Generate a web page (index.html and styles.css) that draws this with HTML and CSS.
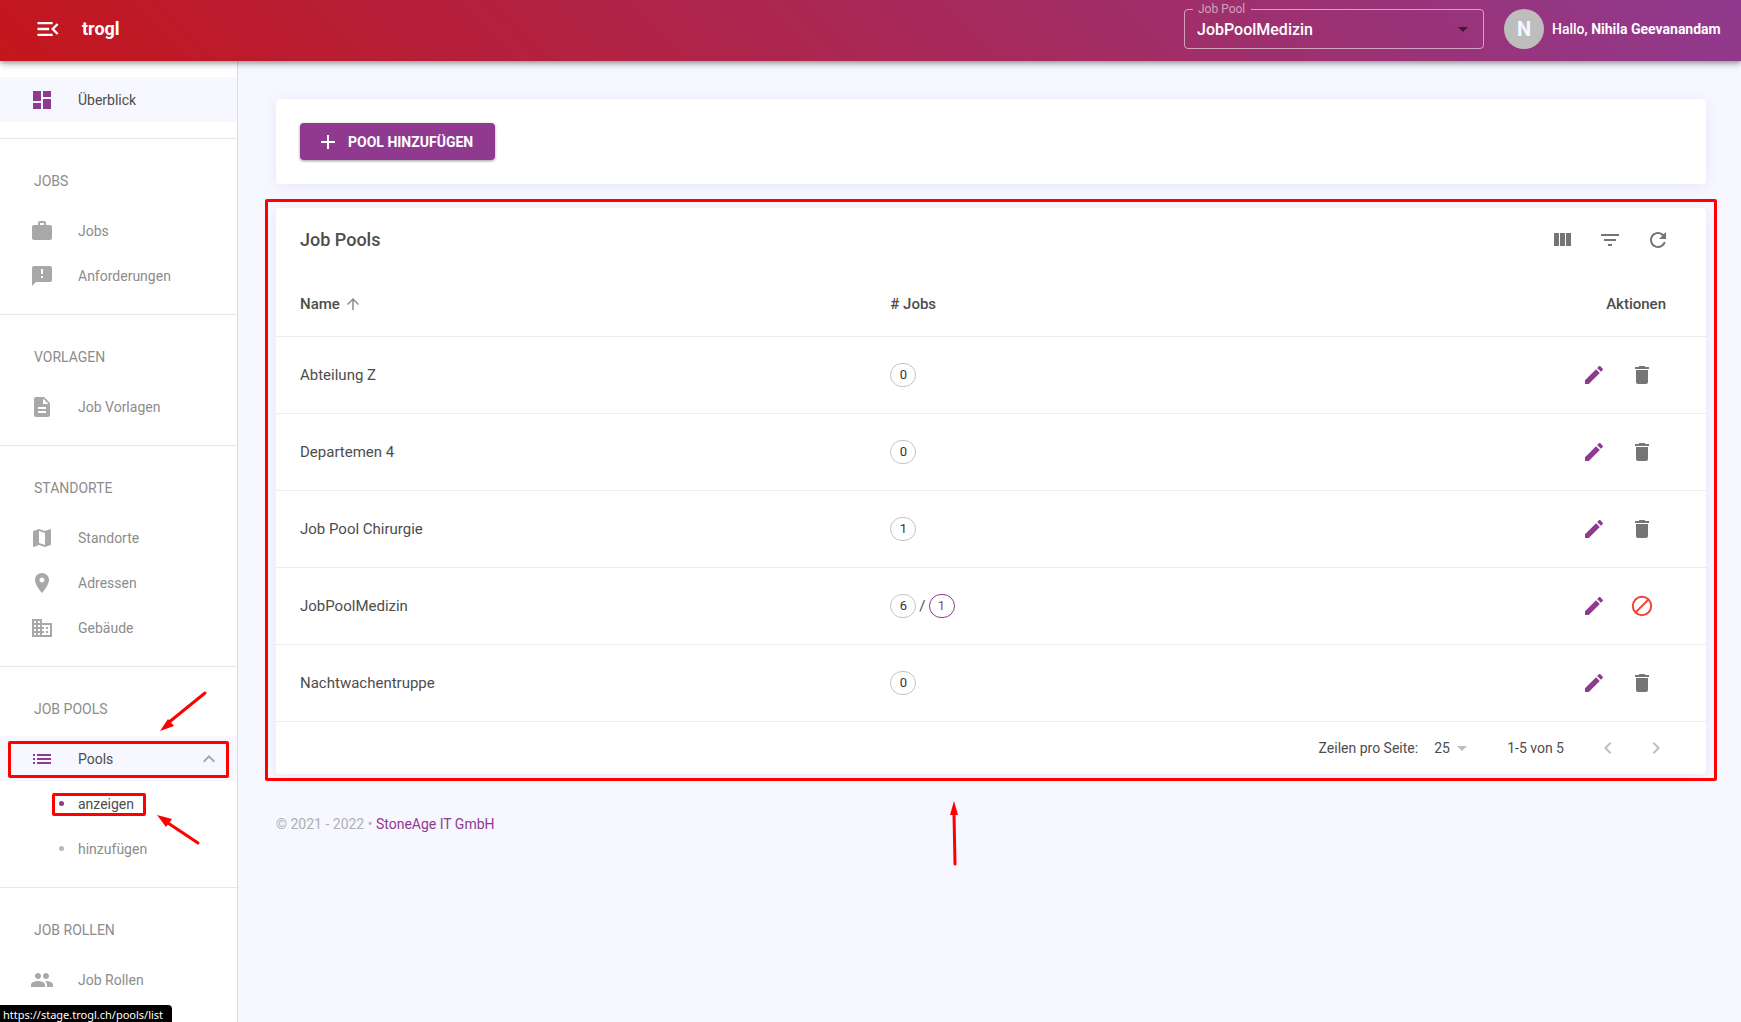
FILE: index.html
```html
<!DOCTYPE html>
<html lang="de">
<head>
<meta charset="utf-8">
<title>trogl – Job Pools</title>
<meta name="viewport" content="width=device-width, initial-scale=1">
<link rel="stylesheet" href="styles.css">
</head>
<body>
<svg class="sprite" aria-hidden="true">
  <symbol id="i-edit" viewBox="0 0 24 24"><path d="M3 17.25V21h3.75L17.81 9.94l-3.75-3.75L3 17.25zM20.71 7.04c.39-.39.39-1.02 0-1.41l-2.34-2.34c-.39-.39-1.02-.39-1.41 0l-1.83 1.83 3.75 3.75 1.83-1.83z"/></symbol>
  <symbol id="i-delete" viewBox="0 0 24 24"><path d="M6 19c0 1.1.9 2 2 2h8c1.1 0 2-.9 2-2V7H6v12zM19 4h-3.5l-1-1h-5l-1 1H5v2h14V4z"/></symbol>
  <symbol id="i-drop" viewBox="0 0 24 24"><path d="M7 10l5 5 5-5z"/></symbol>
</svg>

<header class="topbar">
  <button class="icon-btn menu-btn" aria-label="Menü einklappen"><svg class="icon icon-lg" viewBox="0 0 24 24"><path d="M3 18h13v-2H3v2zM3 13h10v-2H3v2zm0-7v2h13V6H3zm18 9.59L17.42 12 21 8.41 19.59 7l-5 5 5 5L21 15.59z"/></svg></button>
  <a class="brand" href="#">trogl</a>
  <fieldset class="pool-select">
    <legend><label for="pool">Job Pool</label></legend>
    <select id="pool"><option>JobPoolMedizin</option></select>
    <svg class="icon pool-arrow" aria-hidden="true"><use href="#i-drop"/></svg>
  </fieldset>
  <div class="user">
    <span class="avatar">N</span>
    <span>Hallo, <strong>Nihila Geevanandam</strong></span>
  </div>
</header>

<div class="layout">
  <nav class="sidebar">
    <section class="group group-first">
      <a class="nav-item active" href="#"><svg class="icon" viewBox="0 0 24 24"><path d="M3 13h8V3H3v10zm0 8h8v-6H3v6zm10 0h8V11h-8v10zm0-18v6h8V3h-8z"/></svg>Überblick</a>
    </section>
    <section class="group">
      <h2>JOBS</h2>
      <a class="nav-item" href="#"><svg class="icon" viewBox="0 0 24 24"><path d="M20 6h-4V4c0-1.110-.89-2-2-2h-4c-1.110 0-2 .89-2 2v2H4c-1.110 0-2 .89-2 2v11c0 1.110.89 2 2 2h16c1.110 0 2-.89 2-2V8c0-1.110-.89-2-2-2zm-6 0h-4V4h4v2z"/></svg>Jobs</a>
      <a class="nav-item" href="#"><svg class="icon" viewBox="0 0 24 24"><path d="M20 2H4c-1.100 0-2 .9-2 2v18l4-4h14c1.100 0 2-.9 2-2V4c0-1.100-.9-2-2-2zm-7 12h-2v-2h2v2zm0-4h-2V5h2v5z"/></svg>Anforderungen</a>
    </section>
    <section class="group">
      <h2>VORLAGEN</h2>
      <a class="nav-item" href="#"><svg class="icon" viewBox="0 0 24 24"><path d="M14 2H6c-1.100 0-2 .9-2 2v16c0 1.100.9 2 2 2h12c1.100 0 2-.9 2-2V8l-6-6zm2 16H8v-2h8v2zm0-4H8v-2h8v2zm-3-5V3.500L18.500 9H13z"/></svg>Job Vorlagen</a>
    </section>
    <section class="group">
      <h2>STANDORTE</h2>
      <a class="nav-item" href="#"><svg class="icon" viewBox="0 0 24 24"><path d="M20.500 3l-.16.03L15 5.100 9 3 3.360 4.900c-.21.07-.36.25-.36.48V20.500c0 .28.22.5.5.5l.16-.03L9 18.900l6 2.100 5.640-1.900c.21-.07.36-.25.36-.48V3.500c0-.28-.22-.5-.5-.5zM15 19l-6-2.110V5l6 2.110V19z"/></svg>Standorte</a>
      <a class="nav-item" href="#"><svg class="icon" viewBox="0 0 24 24"><path d="M12 2C8.130 2 5 5.130 5 9c0 5.250 7 13 7 13s7-7.750 7-13c0-3.870-3.130-7-7-7zm0 9.500c-1.380 0-2.500-1.120-2.500-2.500s1.120-2.500 2.500-2.500 2.500 1.120 2.500 2.500-1.120 2.500-2.500 2.500z"/></svg>Adressen</a>
      <a class="nav-item" href="#"><svg class="icon" viewBox="0 0 24 24"><path d="M12 7V3H2v18h20V7H12zM6 19H4v-2h2v2zm0-4H4v-2h2v2zm0-4H4V9h2v2zm0-4H4V5h2v2zm4 12H8v-2h2v2zm0-4H8v-2h2v2zm0-4H8V9h2v2zm0-4H8V5h2v2zm10 12h-8v-2h2v-2h-2v-2h2v-2h-2V9h8v10zm-2-8h-2v2h2v-2zm0 4h-2v2h2v-2z"/></svg>Gebäude</a>
    </section>
    <section class="group">
      <h2>JOB POOLS</h2>
      <div class="marked">
        <a class="nav-item active" href="#"><svg class="icon" viewBox="0 0 24 24"><path d="M3 13h2v-2H3v2zm0 4h2v-2H3v2zm0-8h2V7H3v2zm4 4h14v-2H7v2zm0 4h14v-2H7v2zM7 7v2h14V7H7z"/></svg>Pools<svg class="icon chevron" viewBox="0 0 24 24"><path d="M12 8l-6 6 1.410 1.410L12 10.830l4.590 4.580L18 14z"/></svg></a>
        <span class="mark mark-pools"></span>
        <svg class="arrow arrow-pools" viewBox="0 0 50 44"><path class="shaft" d="M47 3L10 33"/><path d="M2 41L10 29L16 36Z"/></svg>
      </div>
      <div class="marked">
        <a class="nav-item sub current" href="#"><i class="dot"></i>anzeigen</a>
        <span class="mark mark-show"></span>
        <svg class="arrow arrow-show" viewBox="0 0 46 34"><path class="shaft" d="M43 30L10 8"/><path d="M2 2L17 6L11 14Z"/></svg>
      </div>
      <a class="nav-item sub" href="#"><i class="dot"></i>hinzufügen</a>
    </section>
    <section class="group">
      <h2>JOB ROLLEN</h2>
      <a class="nav-item" href="#"><svg class="icon" viewBox="0 0 24 24"><path d="M16 11c1.660 0 2.990-1.340 2.990-3S17.660 5 16 5c-1.660 0-3 1.340-3 3s1.340 3 3 3zm-8 0c1.660 0 2.990-1.340 2.990-3S9.660 5 8 5C6.340 5 5 6.340 5 8s1.340 3 3 3zm0 2c-2.330 0-7 1.170-7 3.500V19h14v-2.500c0-2.330-4.670-3.500-7-3.500zm8 0c-.29 0-.62.02-.97.05 1.160.84 1.970 1.970 1.970 3.450V19h6v-2.500c0-2.330-4.670-3.500-7-3.500z"/></svg>Job Rollen</a>
    </section>
  </nav>

  <main class="content">
    <section class="card actions">
      <button class="add-btn"><svg class="icon" viewBox="0 0 24 24"><path d="M19 13h-6v6h-2v-6H5v-2h6V5h2v6h6v2z"/></svg>POOL HINZUFÜGEN</button>
    </section>

    <section class="card table-card">
      <div class="toolbar">
        <h1>Job Pools</h1>
        <button class="icon-btn" aria-label="Spalten"><svg class="icon" viewBox="0 0 24 24"><path d="M10 18h5V5h-5v13zm-6 0h5V5H4v13zM16 5v13h5V5h-5z"/></svg></button>
        <button class="icon-btn" aria-label="Filter"><svg class="icon" viewBox="0 0 24 24"><path d="M10 18h4v-2h-4v2zM3 6v2h18V6H3zm3 7h12v-2H6v2z"/></svg></button>
        <button class="icon-btn" aria-label="Aktualisieren"><svg class="icon" viewBox="0 0 24 24"><path d="M17.650 6.350C16.200 4.900 14.210 4 12 4c-4.420 0-7.990 3.580-7.990 8s3.570 8 7.990 8c3.730 0 6.840-2.550 7.730-6h-2.080c-.82 2.330-3.040 4-5.650 4-3.310 0-6-2.690-6-6s2.690-6 6-6c1.660 0 3.140.69 4.220 1.780L13 11h7V4l-2.350 2.350z"/></svg></button>
      </div>
      <table>
        <thead>
          <tr>
            <th class="col-name" scope="col"><button class="sort">Name<svg class="icon icon-sm" viewBox="0 0 24 24"><path d="M4 12l1.410 1.410L11 7.830V20h2V7.830l5.580 5.590L20 12l-8-8-8 8z"/></svg></button></th>
            <th class="col-jobs" scope="col"># Jobs</th>
            <th class="col-act" scope="col">Aktionen</th>
          </tr>
        </thead>
        <tbody>
          <tr>
            <td>Abteilung Z</td>
            <td><div class="chips"><span class="chip">0</span></div></td>
            <td><div class="row-actions"><button class="icon-btn edit" aria-label="Bearbeiten"><svg class="icon"><use href="#i-edit"/></svg></button><button class="icon-btn" aria-label="Löschen"><svg class="icon"><use href="#i-delete"/></svg></button></div></td>
          </tr>
          <tr>
            <td>Departemen 4</td>
            <td><div class="chips"><span class="chip">0</span></div></td>
            <td><div class="row-actions"><button class="icon-btn edit" aria-label="Bearbeiten"><svg class="icon"><use href="#i-edit"/></svg></button><button class="icon-btn" aria-label="Löschen"><svg class="icon"><use href="#i-delete"/></svg></button></div></td>
          </tr>
          <tr>
            <td>Job Pool Chirurgie</td>
            <td><div class="chips"><span class="chip">1</span></div></td>
            <td><div class="row-actions"><button class="icon-btn edit" aria-label="Bearbeiten"><svg class="icon"><use href="#i-edit"/></svg></button><button class="icon-btn" aria-label="Löschen"><svg class="icon"><use href="#i-delete"/></svg></button></div></td>
          </tr>
          <tr>
            <td>JobPoolMedizin</td>
            <td><div class="chips"><span class="chip">6</span>/<span class="chip chip-primary">1</span></div></td>
            <td><div class="row-actions"><button class="icon-btn edit" aria-label="Bearbeiten"><svg class="icon"><use href="#i-edit"/></svg></button><button class="icon-btn blocked" aria-label="Löschen nicht möglich"><svg class="icon" viewBox="0 0 24 24"><circle cx="12" cy="12" r="9.200"/><path d="M5.500 18.500l13-13"/></svg></button></div></td>
          </tr>
          <tr>
            <td>Nachtwachentruppe</td>
            <td><div class="chips"><span class="chip">0</span></div></td>
            <td><div class="row-actions"><button class="icon-btn edit" aria-label="Bearbeiten"><svg class="icon"><use href="#i-edit"/></svg></button><button class="icon-btn" aria-label="Löschen"><svg class="icon"><use href="#i-delete"/></svg></button></div></td>
          </tr>
        </tbody>
      </table>
      <div class="pagination">
        <label for="rows">Zeilen pro Seite:</label>
        <span class="rows-select"><select id="rows"><option>25</option></select><svg class="icon" aria-hidden="true"><use href="#i-drop"/></svg></span>
        <span class="range">1-5 von 5</span>
        <button class="icon-btn" aria-label="Vorherige Seite" disabled><svg class="icon" viewBox="0 0 24 24"><path d="M15.410 7.410L14 6l-6 6 6 6 1.410-1.410L10.830 12z"/></svg></button>
        <button class="icon-btn" aria-label="Nächste Seite" disabled><svg class="icon" viewBox="0 0 24 24"><path d="M10 6L8.590 7.410 13.170 12l-4.580 4.590L10 18l6-6z"/></svg></button>
      </div>
      <span class="mark mark-table"></span>
      <svg class="arrow arrow-table" viewBox="0 0 10 66"><path class="shaft" d="M6 64L5 14"/><path d="M5 1L9 15H1Z"/></svg>
    </section>

    <footer class="footer">© 2021 - 2022 • <a href="#">StoneAge IT GmbH</a></footer>
  </main>
</div>
<div class="status">https://stage.trogl.ch/pools/list</div>
</body>
</html>
```
FILE: styles.css
```css
:root {
  --primary: #8f3a8f;
  --text: #4d4d4d;
  --muted: #8c8c8c;
  --icon: #757575;
  --nav-icon: #a8a8a8;
  --line: #ececec;
  --page: #f6f7ff;
  --mark: #ff0000;
  --bar: 61px;
}

* { box-sizing: border-box; }

body {
  margin: 0;
  background: var(--page);
  color: var(--text);
  font: 14px/20px Roboto, "Liberation Sans", sans-serif;
}

a { color: inherit; text-decoration: none; }
button, select { font: inherit; color: inherit; background: none; border: 0; padding: 0; margin: 0; cursor: pointer; }
select { appearance: none; }

.sprite { display: none; }
.icon { width: 24px; height: 24px; fill: currentColor; flex: none; display: block; }
.icon-lg { width: 28px; height: 28px; }
.icon-sm { width: 18px; height: 18px; }
.icon-btn { width: 48px; height: 48px; display: flex; align-items: center; justify-content: center; color: var(--icon); flex: none; }

/* top bar */
.topbar {
  position: sticky;
  top: 0;
  z-index: 2;
  display: flex;
  align-items: center;
  height: var(--bar);
  padding: 0 16px 3px 24px;
  color: #fff;
  background: linear-gradient(45deg, #c4161c, #8f3a8f);
  box-shadow: 0 2px 4px rgba(0, 0, 0, .25), 0 3px 8px rgba(0, 0, 0, .2);
}
.menu-btn { color: #fff; }
.brand { margin: 0 auto 0 10px; font-size: 18px; font-weight: 700; }
.pool-select {
  position: relative;
  width: 300px;
  height: 47px;
  margin: 0 20px 7px 0;
  padding: 0;
  border: 1px solid rgba(255, 255, 255, .55);
  border-radius: 4px;
}
.pool-select legend { margin-left: 8px; padding: 0 6px 0 5px; font-size: 12px; line-height: 14px; color: rgba(255, 255, 255, .55); }
.pool-select select { display: block; width: 100%; height: 24px; margin-top: 2px; padding: 0 32px 0 12px; font-size: 16px; font-weight: 500; }
.pool-select option { color: var(--text); }
.pool-arrow { position: absolute; right: 8px; top: 1px; color: rgba(0, 0, 0, .54); pointer-events: none; }
.user { display: flex; align-items: center; gap: 8px; min-width: 221px; font-weight: 500; }
.avatar { width: 40px; height: 40px; border-radius: 50%; background: #bdbdbd; color: var(--page); font-size: 20px; font-weight: 700; line-height: 40px; text-align: center; }

/* layout */
.layout { display: flex; min-height: calc(100vh - var(--bar)); }
.content { flex: 1; min-width: 0; padding: 38px 35px 38px 38px; }

/* sidebar */
.sidebar {
  position: sticky;
  top: var(--bar);
  width: 238px;
  height: calc(100vh - var(--bar));
  flex: none;
  overflow: hidden;
  background: #fff;
  border-right: 1px solid #dcdce2;
}
.group { padding-bottom: 16px; border-bottom: 1px solid #e8e8e8; }
.group:last-child { border-bottom: 0; }
.group-first { padding-top: 16px; }
.group h2 { margin: 0; padding: 32px 34px 17px; font-size: 14px; font-weight: 400; color: var(--muted); }
.nav-item { display: flex; align-items: center; gap: 24px; height: 45px; padding: 0 16px 0 30px; color: var(--muted); }
.nav-item .icon { color: var(--nav-icon); }
.nav-item.active { background: var(--page); color: var(--text); }
.nav-item.active .icon { color: var(--primary); }
.nav-item.active .chevron { margin-left: auto; color: var(--nav-icon); }
.nav-item.sub { gap: 14px; padding-left: 59px; }
.nav-item.current { color: var(--text); }
.dot { width: 5px; height: 5px; border-radius: 50%; background: #b8b8b8; }
.current .dot { background: var(--primary); }

/* cards */
.card { background: #fff; border-radius: 4px; box-shadow: 0 2px 14px rgba(80, 80, 220, .09); }
.actions { padding: 24px; margin-bottom: 24px; }
.add-btn {
  display: flex;
  align-items: center;
  gap: 8px;
  height: 37px;
  padding: 0 22px 0 16px;
  border-radius: 4px;
  background: var(--primary);
  color: #fff;
  font-weight: 700;
  box-shadow: 0 1px 3px rgba(0, 0, 0, .4);
}
.table-card { position: relative; }
.toolbar { display: flex; align-items: center; height: 64px; padding: 0 24px; }
.toolbar h1 { margin: 0 auto 0 0; font-size: 18px; font-weight: 500; }

table { width: 100%; table-layout: fixed; border-collapse: collapse; font-size: 15px; }
th, td { height: 77px; padding: 0 40px 0 24px; border-bottom: 1px solid var(--line); text-align: left; font-weight: 400; }
th { height: 64px; font-weight: 500; }
.col-name { width: 41%; }
th:nth-child(2), td:nth-child(2) { padding-left: 28px; }
.col-act { text-align: right; }
.sort { display: flex; align-items: center; gap: 4px; }
.sort .icon { color: #8a8a8a; }
.row-actions { display: flex; justify-content: flex-end; }
.edit { color: var(--primary); }
.blocked .icon { fill: none; stroke: #f44336; stroke-width: 2; }
.chips { display: flex; align-items: center; gap: 3px; }
.chip { min-width: 26px; height: 24px; border: 1px solid #c4c4c4; border-radius: 12px; font-size: 13px; line-height: 22px; text-align: center; color: #333; }
.chip-primary { border-color: var(--primary); color: var(--primary); }

.pagination { display: flex; align-items: center; justify-content: flex-end; height: 52px; padding-right: 26px; }
.rows-select { display: flex; align-items: center; margin: 0 33px 0 16px; }
.rows-select .icon { color: #bdbdbd; }
.range { margin-right: 20px; }
.pagination .icon-btn { color: #bdbdbd; }

.footer { padding-top: 40px; color: #b0b0b4; }
.footer a { color: var(--primary); }

/* callouts laid over the interface */
.marked { position: relative; }
.mark { position: absolute; border: 3px solid var(--mark); border-radius: 2px; pointer-events: none; }
.mark-pools { inset: 5px 8px 3px; }
.mark-show { left: 52px; top: 12px; width: 94px; height: 23px; }
.mark-table { inset: -9px -11px -7px; }
.arrow { position: absolute; z-index: 1; fill: var(--mark); pointer-events: none; }
.shaft { stroke: var(--mark); stroke-width: 3; stroke-linecap: round; }
.arrow-pools { left: 158px; top: -46px; width: 50px; height: 44px; }
.arrow-show { left: 155px; top: 32px; width: 46px; height: 34px; }
.arrow-table { left: 673px; bottom: -92px; width: 10px; height: 66px; }

.status {
  position: fixed;
  left: 0;
  bottom: 0;
  z-index: 3;
  padding: 2px 9px 0 3px;
  border-radius: 0 4px 0 0;
  background: #000;
  color: #fff;
  font: 11px/15px "Noto Sans", "Open Sans", sans-serif;
}
```
